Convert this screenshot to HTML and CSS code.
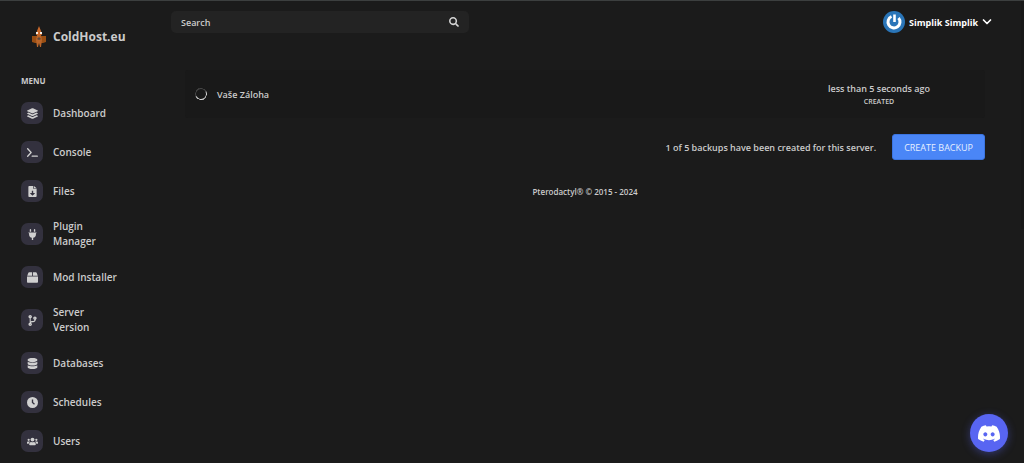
FILE: index.html
```html
<!DOCTYPE html>
<html lang="en">
<head>
<meta charset="utf-8">
<meta name="viewport" content="width=device-width, initial-scale=1">
<title>ColdHost.eu</title>
<link rel="stylesheet" href="styles.css">
</head>
<body>
<div class="app">
  <aside class="sidebar">
    <a class="brand" href="#">
      <svg class="brand-logo" viewBox="0 0 14 22" aria-hidden="true">
        <path fill="#c8682a" d="M7 0 9 5 10 9H4L5 5z"/>
        <path fill="#9a4f14" d="M0 10H14V16L11 17H3L0 16z"/>
        <path fill="#b9652a" d="M5 9H9L10 14 9 21H8L7 17 6 21H5L4 14z"/>
        <path fill="#f4ede4" d="M4 6H6V8H4zM8 6H10V8H8z"/>
        <path fill="#5b4a40" d="M5 13 7 11 9 13 7 14z"/>
      </svg>
      <span>ColdHost.eu</span>
    </a>
    <h2 class="menu-title">MENU</h2>
    <nav class="menu">
      <a class="menu-item" href="#"><span class="tile"><svg viewBox="0 0 512 512"><path d="M12 149 232 249c15 7 33 7 48 0l220-100c15-7 15-27 0-34L280 15c-15-7-33-7-48 0L12 115c-15 7-15 27 0 34zM500 239l-55-25-151 69c-24 11-52 11-76 0L67 214l-55 25c-15 7-15 27 0 34l220 100c15 7 33 7 48 0l220-100c15-7 15-27 0-34zM500 363l-55-25-151 69c-24 11-52 11-76 0L67 338l-55 25c-15 7-15 27 0 34l220 100c15 7 33 7 48 0l220-100c15-7 15-27 0-34z"/></svg></span><span>Dashboard</span></a>
      <a class="menu-item" href="#"><span class="tile"><svg viewBox="0 0 512 512"><path d="M9 99c-12-12-12-31 0-43 13-12 33-12 45 0l160 176c12 12 12 32 0 44L54 452c-12 12-32 12-45 0-12-12-12-31 0-43l142-155zM240 400h240c40 0 40 56 0 56H240c-40 0-40-56 0-56z"/></svg></span><span>Console</span></a>
      <a class="menu-item" href="#"><span class="tile"><svg viewBox="0 0 384 512"><path fill-rule="evenodd" d="M224 0v112c0 9 7 16 16 16h144v336c0 27-21 48-48 48H48c-27 0-48-21-48-48V48C0 21 21 0 48 0zM256 0l128 104H256zM160 224v96H96c-18 0-24 16-12 28l96 92c7 7 17 7 24 0l96-92c12-12 6-28-12-28h-64v-96z"/></svg></span><span>Files</span></a>
      <a class="menu-item" href="#"><span class="tile"><svg viewBox="0 0 384 512"><path d="M64 32c0-42 64-42 64 0v96H64zM256 32c0-42 64-42 64 0v96h-64zM16 160h352c21 0 21 32 0 32h-16v64c0 77-55 142-128 157v99h-64v-99C87 398 32 333 32 256v-64H16c-21 0-21-32 0-32z"/></svg></span><span>Plugin<br>Manager</span></a>
      <a class="menu-item" href="#"><span class="tile"><svg viewBox="0 0 512 512"><path d="M100 16h136v160H12L58 44c7-18 24-28 42-28zM276 16h136c18 0 35 10 42 28l46 132H276zM0 208h512v240c0 27-21 48-48 48H48c-27 0-48-21-48-48z"/></svg></span><span>Mod Installer</span></a>
      <a class="menu-item" href="#"><span class="tile"><svg viewBox="0 0 384 512"><path fill-rule="evenodd" d="M384 144c0-44-36-80-80-80s-80 36-80 80c0 36 24 67 58 77-1 16-4 28-11 36-16 19-49 22-84 26-27 2-56 5-79 16V155c32-10 56-40 56-75 0-44-36-80-80-80S4 36 4 80c0 35 24 65 56 75v202c-32 10-56 40-56 75 0 44 36 80 80 80s80-36 80-80c0-34-21-62-51-75 9-12 34-16 79-20 44-4 93-9 125-45 16-19 24-43 25-72 31-12 42-41 42-76zM84 64a16 16 0 1 1 0 32 16 16 0 0 1 0-32zM84 448a16 16 0 1 1 0-32 16 16 0 0 1 0 32zM304 128a16 16 0 1 1 0 32 16 16 0 0 1 0-32z"/></svg></span><span>Server<br>Version</span></a>
      <a class="menu-item" href="#"><span class="tile"><svg viewBox="0 0 448 512"><path d="M448 73v46c0 40-100 73-224 73S0 159 0 119V73C0 33 100 0 224 0s224 33 224 73zM448 176v103c0 40-100 73-224 73S0 319 0 279V176c48 33 136 48 224 48s176-15 224-48zM448 336v103c0 40-100 73-224 73S0 479 0 439V336c48 33 136 48 224 48s176-15 224-48z"/></svg></span><span>Databases</span></a>
      <a class="menu-item" href="#"><span class="tile"><svg viewBox="0 0 512 512"><path fill-rule="evenodd" d="M256 0a256 256 0 1 1 0 512 256 256 0 0 1 0-512zM224 112v160l104 92 40-48-80-70V112z"/></svg></span><span>Schedules</span></a>
      <a class="menu-item" href="#"><span class="tile"><svg viewBox="0 0 640 512"><circle cx="96" cy="160" r="64"/><circle cx="544" cy="160" r="64"/><circle cx="320" cy="144" r="112"/><path d="M64 256h64c18 0 34 7 45 18-40 22-68 62-75 110H32c-18 0-32-14-32-32v-32c0-35 29-64 64-64zM512 256h64c35 0 64 29 64 64v32c0 18-14 32-32 32h-66c-6-48-35-88-75-110 11-11 27-18 45-18zM243 288c48 24 106 24 154 0 64 0 115 52 115 115v29c0 27-21 48-48 48H176c-27 0-48-21-48-48v-29c0-63 51-115 115-115z"/></svg></span><span>Users</span></a>
    </nav>
  </aside>

  <div class="page">
    <header class="topbar">
      <form class="search">
        <input class="search-input" type="text" placeholder="Search" aria-label="Search">
        <button class="search-button" type="button" aria-label="Submit search">
          <svg viewBox="0 0 512 512"><path d="M505 443 405 343c-4-4-11-7-17-7h-16c28-35 44-80 44-128C416 93 323 0 208 0S0 93 0 208s93 208 208 208c48 0 93-16 128-44v16c0 6 3 13 7 17l100 100c9 9 24 9 34 0l28-28c9-10 9-25 0-34zM208 336a128 128 0 1 1 0-256 128 128 0 0 1 0 256z"/></svg>
        </button>
      </form>
      <button class="account" type="button">
        <svg class="avatar" viewBox="0 0 22 22" aria-hidden="true">
          <circle cx="11" cy="11" r="11" fill="#2a75b8"/>
          <path d="M8.500 5.500A6 6 0 1 0 15.500 7" fill="none" stroke="#fff" stroke-width="3"/>
          <path d="M11.500 3.500V11" stroke="#fff" stroke-width="2.600"/>
        </svg>
        <span>Simplik Simplik</span>
        <svg class="chevron" viewBox="0 0 10 10" aria-hidden="true"><path d="M1.500 3 5 6.500 8.500 3" fill="none" stroke="#fff" stroke-width="1.700" stroke-linecap="round" stroke-linejoin="round"/></svg>
      </button>
    </header>

    <main class="content">
      <section class="backup">
        <span class="spinner" role="status" aria-label="In progress"></span>
        <span class="backup-name">Vaše Záloha</span>
        <div class="backup-time">
          <p class="time">less than 5 seconds ago</p>
          <p class="time-label">CREATED</p>
        </div>
      </section>
      <div class="actions">
        <p>1 of 5 backups have been created for this server.</p>
        <button class="create" type="button">CREATE BACKUP</button>
      </div>
      <footer class="footer"><a href="#">Pterodactyl®</a> © 2015 - 2024</footer>
    </main>
  </div>
</div>
<button class="discord" type="button" aria-label="Open Discord chat">
  <svg viewBox="0 0 24 18" aria-hidden="true"><path fill="#fff" fill-rule="evenodd" d="M20.300 1.500A19.800 19.800 0 0 0 15.400 0l-.7 1.300a18.300 18.300 0 0 0-5.400 0L8.600 0a19.700 19.700 0 0 0-4.900 1.500C.6 6.100-.3 10.600.1 15a19.900 19.900 0 0 0 6 3l1.300-2a13 13 0 0 1-1.900-.9l.4-.3a14.200 14.200 0 0 0 12.200 0l.4.3c-.6.400-1.200.700-1.900.9l1.300 2a19.800 19.800 0 0 0 6-3c.5-5.200-.8-9.700-3.600-13.500zM8 12.300c-1.200 0-2.200-1.100-2.200-2.400S6.800 7.500 8 7.500s2.200 1.100 2.200 2.400-1 2.400-2.200 2.400zm8 0c-1.200 0-2.200-1.100-2.200-2.400s1-2.400 2.200-2.400 2.200 1.100 2.200 2.400-1 2.400-2.200 2.400z"/></svg>
</button>
</body>
</html>
```
FILE: styles.css
```css
* {
  box-sizing: border-box;
}

body {
  margin: 0;
  background: #1b1b1b;
  color: #cbcbcb;
  font: 600 9px/15px "Open Sans", "Noto Sans", sans-serif;
  overflow: hidden;
}

h2,
p {
  margin: 0;
}

a {
  color: inherit;
  text-decoration: none;
}

button {
  font: inherit;
  color: inherit;
  border: 0;
  background: none;
  padding: 0;
  cursor: pointer;
}

.app {
  display: flex;
  min-height: 100vh;
  border-top: 1px solid #3c3f3f;
}

.sidebar {
  flex: 0 0 150px;
  padding: 25px 0 10px 21px;
}

.brand {
  display: flex;
  align-items: center;
  gap: 7px;
  padding-left: 11px;
  font-size: 12px;
  line-height: 22px;
  font-weight: 700;
}

.brand-logo {
  width: 14px;
  height: 22px;
}

.menu-title {
  margin-top: 25px;
  font-size: 8px;
  line-height: 16px;
  font-weight: 700;
}

.menu {
  display: flex;
  flex-direction: column;
  gap: 17px;
  margin-top: 13px;
  font-size: 10px;
}

.menu-item {
  display: flex;
  align-items: center;
  gap: 10px;
  min-height: 22px;
}

.tile {
  display: flex;
  align-items: center;
  justify-content: center;
  width: 22px;
  height: 22px;
  border-radius: 7px;
  background: #33313e;
}

.tile svg {
  width: 11px;
  height: 11px;
  fill: #d0d0d0;
}

.page {
  flex: 1;
  min-width: 0;
  background: linear-gradient(#181818, #181818) right top / 3px 228px no-repeat;
}

.topbar {
  display: flex;
  align-items: center;
  justify-content: space-between;
  padding: 10px 32px 0 21px;
}

.search {
  display: flex;
  align-items: center;
  flex: 0 1 298px;
  height: 22px;
  padding: 0 10px;
  border-radius: 5px;
  background: #232323;
}

.search-input {
  flex: 1;
  min-width: 0;
  padding: 0;
  border: 0;
  outline: 0;
  background: none;
  color: inherit;
  font: inherit;
}

.search-input::placeholder {
  color: #cbcbcb;
  opacity: 1;
}

.search-button {
  display: flex;
}

.search-button svg {
  width: 10px;
  height: 10px;
  fill: #d4d4d4;
}

.account {
  display: flex;
  align-items: center;
  gap: 4px;
  color: #fff;
  font-weight: 700;
}

.avatar {
  width: 22px;
  height: 22px;
}

.chevron {
  width: 10px;
  height: 10px;
}

.content {
  padding: 37px 39px 0 35px;
}

.backup {
  display: flex;
  align-items: center;
  padding: 11px 10px;
  border-radius: 3px;
  background: #191919;
}

.spinner {
  width: 12px;
  height: 12px;
  border: 1px solid #494949;
  border-right-color: #d6d6d6;
  border-bottom-color: #d6d6d6;
  border-radius: 50%;
  transform: rotate(20deg);
}

.backup-name {
  flex: 1;
  margin-left: 10px;
}

.backup-time {
  width: 192px;
  text-align: center;
}

.time-label {
  font-size: 7px;
  line-height: 11px;
}

.actions {
  display: flex;
  align-items: center;
  justify-content: flex-end;
  gap: 16px;
  margin-top: 16px;
}

.create {
  height: 26px;
  padding: 0 11px;
  border: 1px solid #3b74e0;
  border-radius: 3px;
  background: #4a86f7;
  color: #e6efff;
  font-weight: 500;
}

.footer {
  margin-top: 24px;
  font-size: 8px;
  line-height: 16px;
  text-align: center;
}

.discord {
  position: fixed;
  right: 16px;
  bottom: 11px;
  display: flex;
  align-items: center;
  justify-content: center;
  width: 38px;
  height: 38px;
  border-radius: 50%;
  background: #5865f2;
  box-shadow: 0 2px 8px rgba(88, 101, 242, 0.4);
}

.discord svg {
  width: 22px;
  height: 17px;
}
```
